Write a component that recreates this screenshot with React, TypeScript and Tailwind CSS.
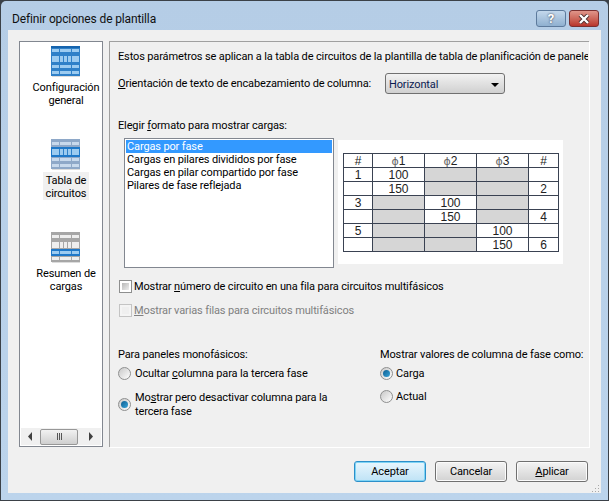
import React from 'react';

type Band = 'all' | 'middle' | 'lower';

// rows of the sidebar icon, y and height inside the 29x30 box; the middle one has five cells
const iconRows = [
  { y: 3, h: 3, cuts: [8, 20] },
  { y: 10, h: 6, cuts: [8, 12, 16, 20] },
  { y: 19, h: 3, cuts: [8, 20] },
  { y: 25, h: 3, cuts: [8, 20] },
];

const TableIcon = ({ band }: { band: Band }) => {
  const picked = (i: number) => band === 'all' || (band === 'middle' && i === 1) || (band === 'lower' && i === 2);
  const base = band === 'all' ? '#2f80c8' : band === 'middle' ? '#8ea8c8' : '#a6a6a6';
  const pale = band === 'middle' ? '#c8d9ec' : '#eeeeee';
  return (
    <svg width="30" height="31" viewBox="0 0 30 31" className="block">
      <rect x="1" y="30" width="28" height="1" fill="#dcdcdc" />
      <rect x="0" y="0" width="29" height="30" fill={base} />
      <rect x="0" y="0" width="29" height="2" fill={band === 'all' ? '#1664ae' : base} />
      {iconRows.map((r, i) => (
        <g key={r.y}>
          {picked(i) && band !== 'all' && <rect x="0" y={r.y - 2} width="29" height={r.h + 4} fill="#1f78c8" />}
          <rect x="1" y={r.y} width="27" height={r.h} fill={picked(i) ? '#9ccbf0' : pale} />
          {r.cuts.map((c) => (
            <rect key={c} x={c} y={r.y} width="1" height={r.h} fill={picked(i) ? '#2f80c8' : base} />
          ))}
        </g>
      ))}
    </svg>
  );
};

const NavItem = ({ band, label, active, mt }: { band: Band; label: string[]; active?: boolean; mt: string }) => (
  <div className={`flex flex-col items-center ${mt}`}>
    <TableIcon band={band} />
    <div className={`mt-[2px] px-[3px] pt-[2px] text-center leading-[13px] ${active ? 'bg-[#f0f0f0]' : ''}`}>
      {label.map((l) => (
        <div key={l}>{l}</div>
      ))}
    </div>
  </div>
);

const Check = ({ disabled }: { disabled?: boolean }) => (
  <span className={`block w-[13px] h-[13px] shrink-0 border p-[2px] ${disabled ? 'border-[#c4c4c4] bg-[#f4f4f4]' : 'border-[#8e8f8f] bg-white'}`}>
    <span className={`block w-full h-full ${disabled ? 'bg-[#efefef]' : 'bg-gradient-to-br from-[#b8b8b8] to-[#efefef]'}`} />
  </span>
);

const Radio = ({ on }: { on?: boolean }) => (
  <span className="flex items-center justify-center w-[13px] h-[13px] shrink-0 rounded-full border border-[#8e8f8f] bg-gradient-to-br from-[#c8c8c8] to-[#ffffff]">
    {on && <span className="block w-[7px] h-[7px] rounded-full bg-gradient-to-br from-[#0d5f92] to-[#36a3d8]" />}
  </span>
);

const Btn = ({ children, primary }: { children: React.ReactNode; primary?: boolean }) => (
  <div
    className={`w-[72px] h-[21px] pt-[2px] flex items-center justify-center rounded-[3px] border text-black ${
      primary
        ? 'border-[#2c8fc9] bg-gradient-to-b from-[#e8f6fd] to-[#bfe3f6] shadow-[inset_0_0_0_1px_#7fd4f5]'
        : 'border-[#707070] bg-gradient-to-b from-[#f4f4f4] to-[#d2d2d2] shadow-[inset_0_0_0_1px_#fbfbfb]'
    }`}
  >
    {children}
  </div>
);

const Cell = ({ children, grey, w }: { children?: React.ReactNode; grey?: boolean; w: string }) => (
  <div className={`${w} h-[14px] flex items-center justify-center border-r border-b border-[#3a4252] leading-none ${grey ? 'bg-[#d6d6d6]' : 'bg-white'}`}>
    {children}
  </div>
);

const Phi = ({ n }: { n: number }) => (
  <span>
    <span className="font-['DejaVu_Sans',sans-serif] text-[11px] text-[#666]">ϕ</span>
    {n}
  </span>
);

const rowsData: { n?: string; m?: string; v: (string | null)[] }[] = [
  { n: '1', v: ['100', null, null] },
  { m: '2', v: ['150', null, null] },
  { n: '3', v: [null, '100', null] },
  { m: '4', v: [null, '150', null] },
  { n: '5', v: [null, null, '100'] },
  { m: '6', v: [null, null, '150'] },
];

const PreviewTable = () => (
  <div className="w-[225px] h-[124px] bg-white ml-[4px] mt-[2px] pt-[13px] pl-[5px] font-['Liberation_Sans',sans-serif] text-[12px] tracking-normal text-[#222]">
    <div className="w-[216px] border-l border-t border-[#3a4252]">
      <div className="flex">
        <Cell w="w-[29px]">#</Cell>
        <Cell w="w-[52px]"><Phi n={1} /></Cell>
        <Cell w="w-[52px]"><Phi n={2} /></Cell>
        <Cell w="w-[52px]"><Phi n={3} /></Cell>
        <Cell w="w-[30px]">#</Cell>
      </div>
      {rowsData.map((r, i) => (
        <div className="flex" key={i}>
          <Cell w="w-[29px]">{r.n}</Cell>
          {r.v.map((v, j) => (
            <Cell key={j} w="w-[52px]" grey={v === null}>
              {v}
            </Cell>
          ))}
          <Cell w="w-[30px]">{r.m}</Cell>
        </div>
      ))}
    </div>
  </div>
);

const App: React.FC = () => {
  return (
    <div className="w-[609px] h-[501px] overflow-hidden bg-[#3b4148] font-['Roboto',sans-serif] text-[11px] tracking-[-0.13px] text-black">
      <div className="w-[607px] h-[499px] m-[1px] rounded-t-[5px] bg-gradient-to-b from-[#b5cde6] to-[#bcd4ec] flex flex-col">
        {/* Title bar */}
        <div className="h-[29px] shrink-0 flex items-start justify-between pl-[11px] pr-[9px]">
          <div className="text-[12px] leading-[16px] mt-[10px] text-[#101010]">Definir opciones de plantilla</div>
          <div className="flex gap-[3px] mt-[9px]">
            <div className="w-[30px] h-[17px] rounded-[3px] border border-[#5d7a9c] bg-gradient-to-b from-[#c4d8ec] to-[#8fb0d0] flex items-center justify-center text-white text-[13px] font-bold leading-none [text-shadow:0_0_2px_#223]">?</div>
            <div className="w-[30px] h-[17px] rounded-[3px] border border-[#7a3030] bg-gradient-to-b from-[#e0958a] to-[#b8352c] flex items-center justify-center">
              <svg width="14" height="10" viewBox="0 0 14 10">
                <path d="M3 1 L11 9 M11 1 L3 9" stroke="#4a2a2a" strokeWidth="4" />
                <path d="M3 1 L11 9 M11 1 L3 9" stroke="#ffffff" strokeWidth="2.4" />
              </svg>
            </div>
          </div>
        </div>

        {/* Client area */}
        <div className="w-[593px] h-[463px] ml-[7px] bg-[#f0f0f0] flex flex-col">
          <div className="flex pl-[11px] pt-[11px] gap-[6px]">
            {/* Left nav */}
            <div className="w-[84px] h-[406px] border border-[#828790] bg-white flex flex-col justify-between">
              <div className="pt-[4px] pl-[10px]">
                <NavItem band="all" label={['Configuración', 'general']} mt="mt-0" />
                <NavItem band="middle" label={['Tabla de', 'circuitos']} active mt="mt-[32px]" />
                <NavItem band="lower" label={['Resumen de', 'cargas']} mt="mt-[32px]" />
              </div>
              <div className="h-[17px] mx-[1px] mb-[1px] bg-[#f0f0f0] flex items-center pl-[7px] pr-[7px]">
                <svg width="5" height="9" viewBox="0 0 5 9"><path d="M4 0 L0 4.5 L4 9 Z" fill="#404040" /></svg>
                <div className="w-[38px] h-[16px] ml-[7px] rounded-[2px] border border-[#979797] bg-gradient-to-b from-[#f2f2f2] to-[#cfcfcf] flex items-center justify-center gap-[1px]">
                  <span className="w-[1px] h-[7px] bg-[#555]" />
                  <span className="w-[1px] h-[7px] bg-[#555]" />
                  <span className="w-[1px] h-[7px] bg-[#555]" />
                </div>
                <svg className="ml-auto" width="5" height="9" viewBox="0 0 5 9"><path d="M0 0 L4 4.5 L0 9 Z" fill="#404040" /></svg>
              </div>
            </div>

            {/* Right panel */}
            <div className="w-[480px] h-[406px] border-l border-t border-[#a0a0a0] shadow-[1px_1px_0_#ffffff] pl-[8px] pt-[8px] overflow-hidden whitespace-nowrap leading-[14px]">
              <div className="w-[470px] overflow-hidden">Estos parámetros se aplican a la tabla de circuitos de la plantilla de tabla de planificación de paneles</div>

              <div className="flex items-center mt-[9px] h-[21px]">
                <span className="w-[267px] shrink-0 pt-[1px]">
                  <span className="underline">O</span>rientación de texto de encabezamiento de columna:
                </span>
                <div className="w-[120px] h-[21px] pt-[2px] rounded-[3px] border border-[#707070] bg-gradient-to-b from-[#f2f2f2] to-[#d0d0d0] flex items-center justify-between pl-[3px] pr-[5px] text-[#0a1a50]">
                  Horizontal
                  <svg width="8" height="4" viewBox="0 0 8 4"><path d="M0 0 H8 L4 4 Z" fill="#000" /></svg>
                </div>
              </div>

              <div className="mt-[25px]">
                Elegir <span className="underline">f</span>ormato para mostrar cargas:
              </div>

              <div className="flex ml-[6px] mt-[5px]">
                <div className="w-[210px] h-[130px] border border-[#828790] bg-white p-[1px]">
                  <div className="h-[13px] leading-[13px] bg-[#3399ff] text-white pl-[1px]">Cargas por fase</div>
                  <div className="leading-[13px] pl-[1px]">Cargas en pilares divididos por fase</div>
                  <div className="leading-[13px] pl-[1px]">Cargas en pilar compartido por fase</div>
                  <div className="leading-[13px] pl-[1px]">Pilares de fase reflejada</div>
                </div>
                <PreviewTable />
              </div>

              <div className="flex items-center gap-[2px] ml-[1px] mt-[11px] h-[14px]">
                <Check />
                <span className="pt-[2px]">
                  Mostrar <span className="underline">n</span>úmero de circuito en una fila para circuitos multifásicos
                </span>
              </div>
              <div className="flex items-center gap-[2px] ml-[1px] mt-[10px] h-[14px] text-[#808080]">
                <Check disabled />
                <span className="pt-[2px]">
                  <span className="underline">M</span>ostrar varias filas para circuitos multifásicos
                </span>
              </div>

              <div className="flex mt-[31px]">
                <div className="w-[262px] shrink-0">
                  <div>Para paneles monofásicos:</div>
                  <div className="flex items-center gap-[4px] mt-[4px] h-[14px]">
                    <Radio />
                    <span className="pt-[2px]">
                      Ocultar <span className="underline">c</span>olumna para la tercera fase
                    </span>
                  </div>
                  <div className="flex items-center gap-[4px] mt-[9px]">
                    <Radio on />
                    <span className="pt-[2px]">
                      Mo<span className="underline">s</span>trar pero desactivar columna para la
                      <br />
                      tercera fase
                    </span>
                  </div>
                </div>
                <div>
                  <div>Mostrar valores de columna de fase como:</div>
                  <div className="flex items-center gap-[3px] mt-[4px] h-[14px]">
                    <Radio on />
                    <span className="pt-[2px]">Carga</span>
                  </div>
                  <div className="flex items-center gap-[3px] mt-[9px] h-[14px]">
                    <Radio />
                    <span className="pt-[2px]">Actual</span>
                  </div>
                </div>
              </div>
            </div>
          </div>

          {/* Footer buttons */}
          <div className="flex justify-end gap-[9px] pr-[13px] mt-[14px]">
            <Btn primary>Aceptar</Btn>
            <Btn>Cancelar</Btn>
            <Btn>
              <span>
                <span className="underline">A</span>plicar
              </span>
            </Btn>
          </div>

          {/* Resize grip */}
          <div className="flex justify-end pr-[1px] mt-[3px]">
            <svg width="8" height="8" viewBox="0 0 8 8" fill="#a8a8a8">
              <rect x="6" y="0" width="1" height="1" />
              <rect x="3" y="3" width="1" height="1" />
              <rect x="6" y="3" width="1" height="1" />
              <rect x="0" y="6" width="1" height="1" />
              <rect x="3" y="6" width="1" height="1" />
              <rect x="6" y="6" width="1" height="1" />
            </svg>
          </div>
        </div>
      </div>
    </div>
  );
};

export default App;
